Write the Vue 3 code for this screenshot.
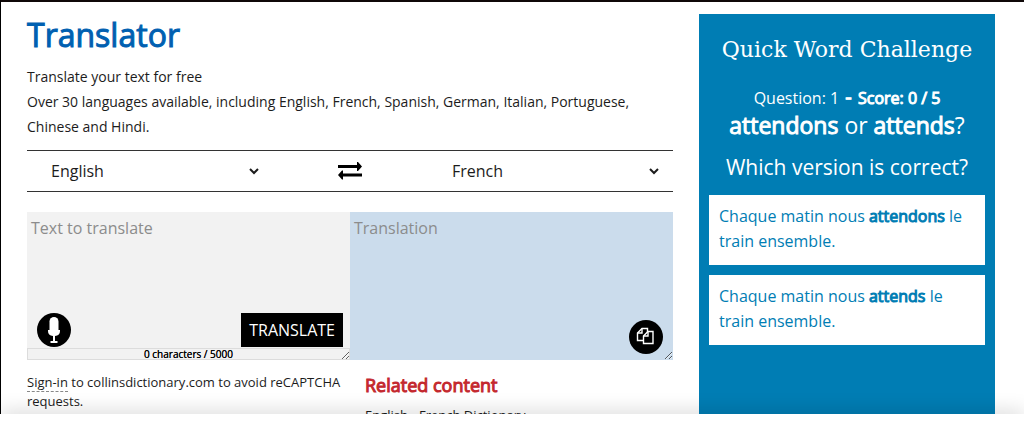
<template>
    <div class="page">
        <div class="content">
            <main class="translator">
                <h1>Translator</h1>
                <div class="intro">
                    <p>Translate your text for free</p>
                    <p>Over 30 languages available, including English, French, Spanish, German, Italian, Portuguese, Chinese and Hindi.</p>
                </div>

                <div class="languages">
                    <select v-model="source" class="source" aria-label="Source language">
                        <option v-for="lang in languages" :key="lang">{{ lang }}</option>
                    </select>
                    <button class="swap" type="button" aria-label="Swap languages" @click="swap">
                        <svg width="24" height="18" viewBox="0 0 24 18">
                            <path d="M0 3h19V0h1l4 4.500L20 9h-1V6H0zM24 11.500H5v-3H4L0 13l4 4.500h1v-3h19z"/>
                        </svg>
                    </button>
                    <select v-model="target" class="target" aria-label="Target language">
                        <option v-for="lang in languages" :key="lang">{{ lang }}</option>
                    </select>
                </div>

                <div class="panes">
                    <div class="pane">
                        <textarea v-model="text" class="input" maxlength="5000" placeholder="Text to translate" aria-label="Text to translate"></textarea>
                        <div class="tools">
                            <div class="buttons">
                                <button class="round" type="button" aria-label="Speak">
                                    <svg width="34" height="34" viewBox="0 0 34 34" fill="#fff">
                                        <rect x="12.500" y="4" width="9" height="18" rx="4.500"/>
                                        <path d="M11 17h12v1a6 5 0 0 1-5 5v5h2.500v2h-7v-2H16v-5a6 5 0 0 1-5-5z"/>
                                    </svg>
                                </button>
                                <button class="translate" type="button">TRANSLATE</button>
                            </div>
                            <div class="counter">{{ text.length }} characters / 5000</div>
                        </div>
                    </div>
                    <div class="pane">
                        <textarea class="output" readonly placeholder="Translation" aria-label="Translation"></textarea>
                        <div class="tools copy">
                            <button class="round" type="button" aria-label="Copy">
                                <svg width="34" height="34" viewBox="0 0 34 34" fill="#000" stroke="#fff" stroke-width="1.400">
                                    <path d="M13 8.500h5.500v12H8.500V13z"/>
                                    <path d="M13 8.500V13H8.500" fill="none"/>
                                    <path d="M19 11.500h5v12h-9.500V16z"/>
                                    <path d="M19 11.500V16h-4.500" fill="none"/>
                                </svg>
                            </button>
                        </div>
                    </div>
                </div>

                <div class="below">
                    <p class="signin"><a href="#">Sign-in</a> to collinsdictionary.com to avoid reCAPTCHA requests.</p>
                    <div class="related">
                        <h2>Related content</h2>
                        <p>English - French Dictionary</p>
                    </div>
                </div>
            </main>

            <aside class="quiz">
                <h2>Quick Word Challenge</h2>
                <p class="score">Question: 1 <span class="dash">-</span> <b>Score: 0 / 5</b></p>
                <p class="words"><b>attendons</b> or <b>attends</b>?</p>
                <p class="ask">Which version is correct?</p>
                <button v-for="word in words" :key="word" class="answer" type="button">
                    Chaque matin nous <b>{{ word }}</b> le train ensemble.
                </button>
            </aside>
        </div>
        <footer class="bar"></footer>
    </div>
</template>

<script setup>
import {ref} from "vue";

const languages = ["English", "French", "Spanish", "German", "Italian", "Portuguese", "Chinese", "Hindi"];
const words = ["attendons", "attends"];

const source = ref("English");
const target = ref("French");
const text = ref("");

function swap() {
    const old = source.value;
    source.value = target.value;
    target.value = old;
}
</script>

<style>
body {
    margin: 0;
    background: #fff;
}
</style>

<style scoped>
* {
    box-sizing: border-box;
}

h1,
h2,
p {
    margin: 0;
    font-weight: 400;
}

button,
select,
textarea {
    font: inherit;
    border: 0;
    margin: 0;
    padding: 0;
}

/* thickened regular weight instead of the bold face */
b,
h1,
.counter,
.dash {
    font-weight: 400;
    -webkit-text-stroke: 1px currentColor;
}

.page {
    display: flex;
    flex-direction: column;
    height: 100vh;
    overflow: hidden;
    font-family: "Open Sans", sans-serif;
    font-size: 14px;
    line-height: 25px;
    color: #1c1c1c;
}

.content {
    flex: 1;
    min-height: 0;
    overflow: hidden;
    display: grid;
    grid-template-columns: minmax(0, 1fr) 296px;
    gap: 26px;
    padding: 12px 29px 0 26px;
    border-top: 2px solid #0f0808;
    border-left: 1px solid #000;
}

h1 {
    font-size: 32px;
    line-height: 42px;
    color: #0060b1;
}

.intro {
    padding: 8px 0 11px;
}

.languages {
    display: grid;
    grid-template-columns: 1fr 24px 1fr;
    align-items: center;
    height: 42px;
    border-top: 1px solid #333;
    border-bottom: 1px solid #333;
    margin-bottom: 20px;
}

select {
    height: 36px;
    font-size: 16px;
    background: transparent;
    color: #1c1c1c;
}

.source {
    margin: 0 76px 0 20px;
}

.target {
    margin: 0 11px 0 86px;
}

.swap {
    display: flex;
    background: none;
}

.panes,
.below {
    display: grid;
    grid-template-columns: 1fr 1fr;
}

.pane {
    display: grid;
}

textarea,
.tools {
    grid-area: 1 / 1;
}

textarea {
    height: 148px;
    padding: 4px;
    font-size: 16px;
    line-height: 25px;
    resize: vertical;
}

textarea::placeholder {
    color: #8c8c8c;
}

.input {
    background: #f2f2f2;
}

.output {
    background: #cbdcec;
}

.tools {
    align-self: end;
    pointer-events: none;
    z-index: 1;
}

.tools button {
    pointer-events: auto;
}

.buttons {
    display: flex;
    justify-content: space-between;
    padding: 0 7px 1px 10px;
}

.round {
    width: 34px;
    height: 34px;
    border-radius: 50%;
    background: #000;
}

.round svg {
    display: block;
}

.translate {
    padding: 0 8px;
    height: 34px;
    background: #000;
    color: #fff;
    font-size: 16px;
}

.counter {
    height: 12px;
    border: 1px solid #dcdcdc;
    font-size: 10px;
    line-height: 10px;
    text-align: center;
    color: #000;
    -webkit-text-stroke-width: 0;
    text-shadow: 0 0 0 #000;
}

.copy {
    display: flex;
    justify-self: end;
    padding: 0 10px 6px;
}

.signin {
    padding-top: 13px;
    font-size: 13px;
    line-height: 19px;
}

.signin a {
    color: inherit;
    text-decoration: none;
    border-bottom: 1px dashed #888;
}

.related {
    padding: 13px 0 0 15px;
    font-size: 13px;
    white-space: nowrap;
}

.related h2 {
    font-size: 18px;
    line-height: 25px;
    margin-bottom: 5px;
    color: #c4282e;
    -webkit-text-stroke: 1px currentColor;
}

.quiz {
    display: flex;
    flex-direction: column;
    gap: 10px;
    padding: 20px 10px;
    background: #007db4;
    color: #fff;
    text-align: center;
    font-size: 16px;
}

.quiz h2 {
    font-family: "DejaVu Serif", serif;
    font-size: 22px;
    line-height: 32px;
}

.score {
    padding-top: 8px;
}

.dash {
    padding: 0 2px;
    font-size: 20px;
    line-height: 25px;
}

.words {
    margin-top: -12px;
    font-size: 23px;
    line-height: 32px;
}

.ask {
    font-size: 21px;
    line-height: 32px;
    padding-bottom: 2px;
}

.answer {
    padding: 9px 10px 11px;
    line-height: 25px;
    background: #fff;
    color: #007db4;
    text-align: left;
}

.bar {
    flex: none;
    position: relative;
    height: 9px;
    background: #fff;
    box-shadow: 0 0 20px rgba(0, 0, 0, 0.25);
}
</style>
